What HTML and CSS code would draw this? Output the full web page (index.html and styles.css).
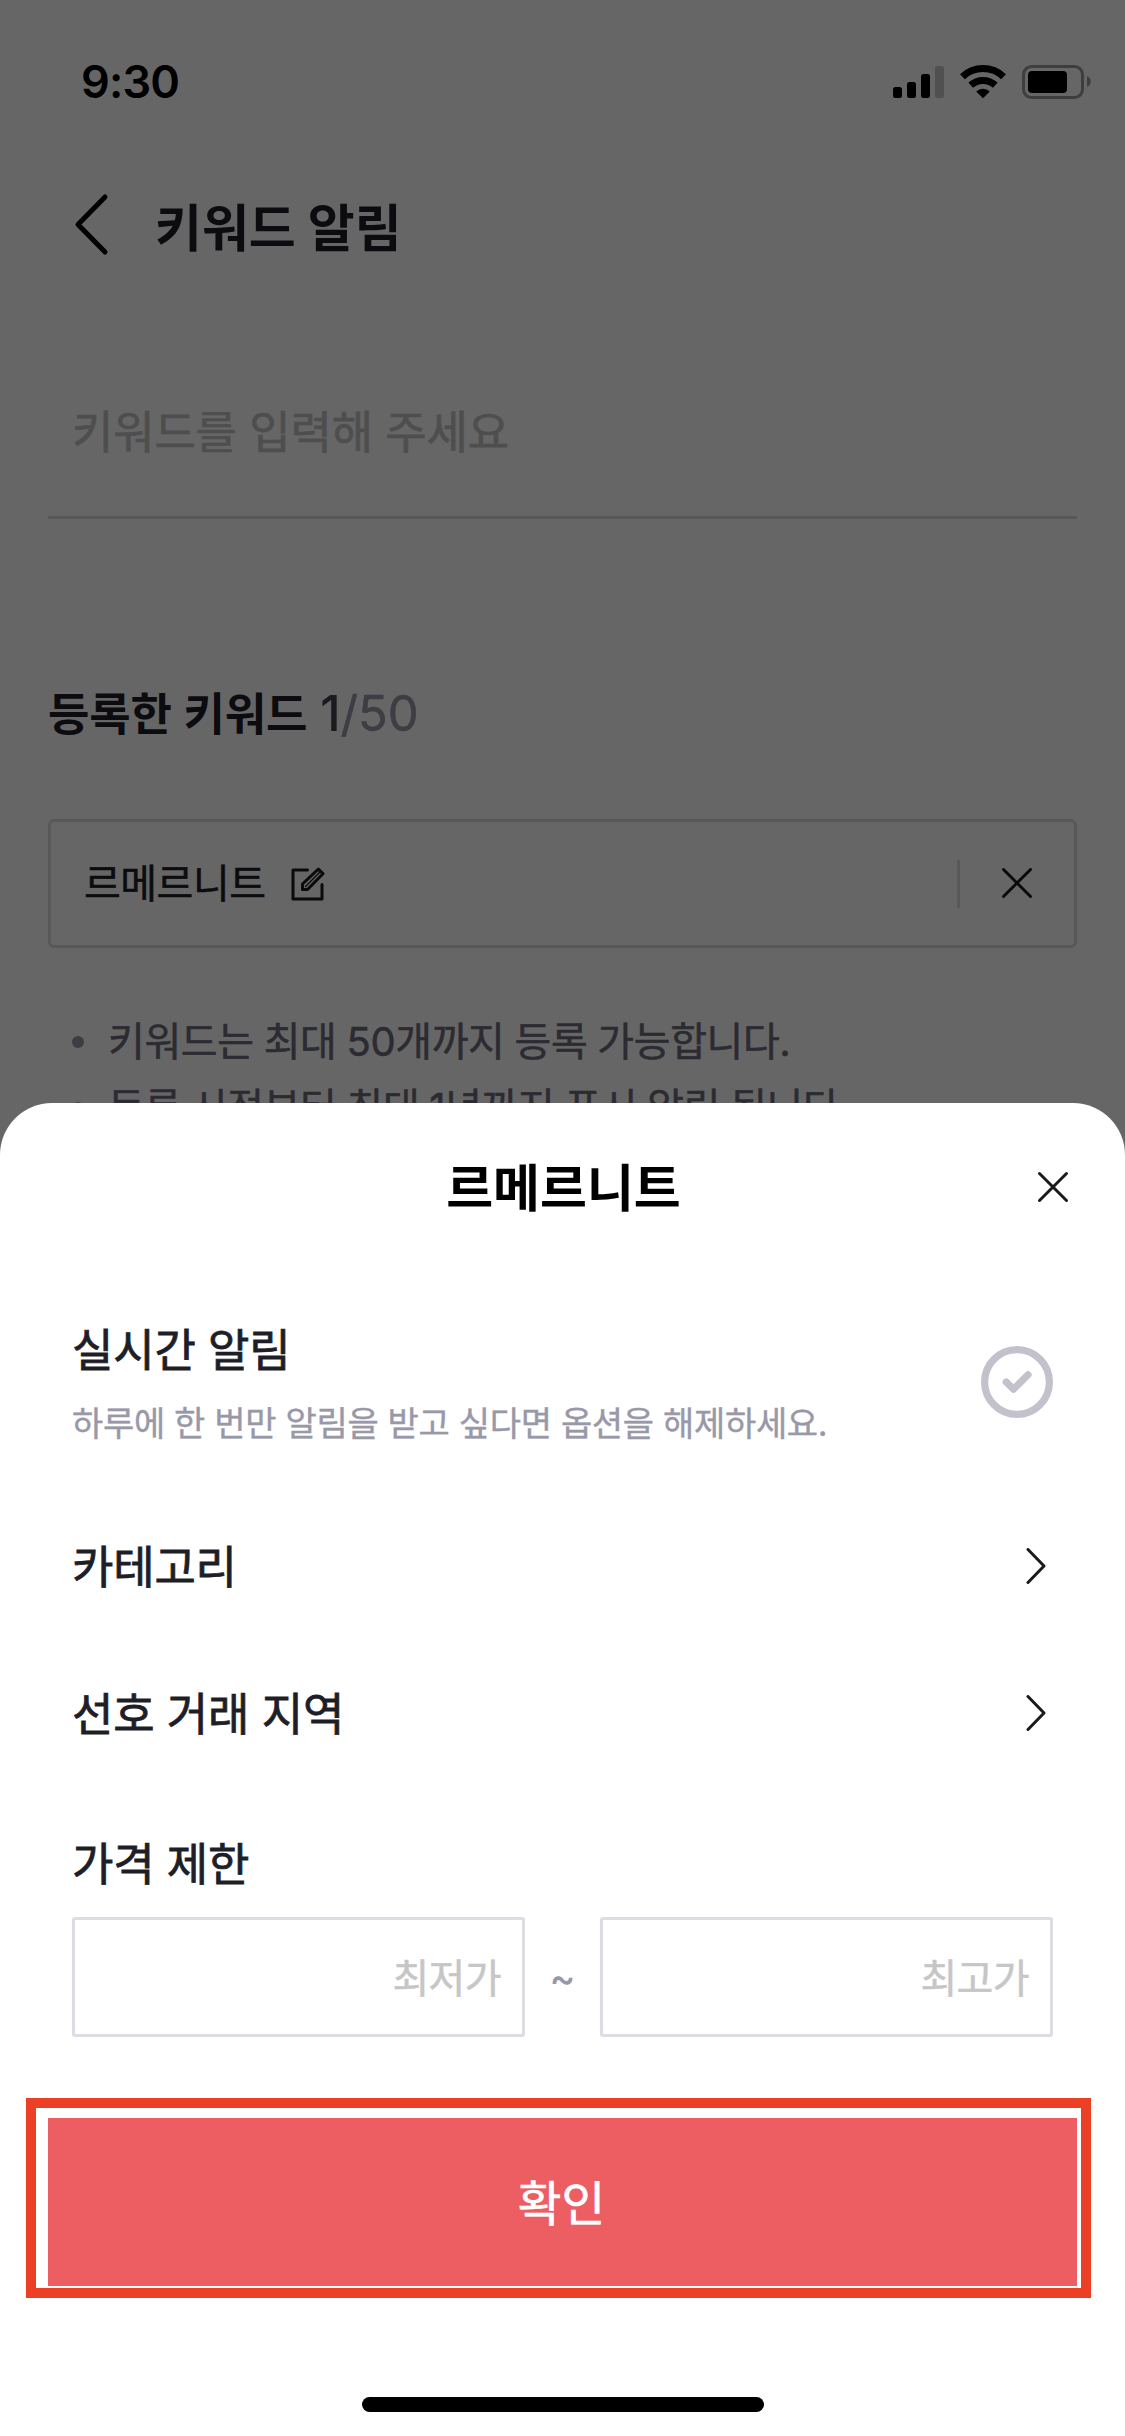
FILE: index.html
```html
<!DOCTYPE html>
<html lang="ko">
<head>
<meta charset="utf-8">
<title>키워드 알림</title>
<link rel="stylesheet" href="styles.css">
</head>
<body>
<div class="screen">
  <div class="page">
    <div class="status">
      <span class="time">9:30</span>
      <svg class="status-icons" width="200" height="36" viewBox="892 64 200 36">
        <rect x="893" y="87" width="9" height="11" rx="2.5"/>
        <rect x="907" y="82" width="9" height="16" rx="2.5"/>
        <rect x="921" y="74" width="9" height="24" rx="2.5"/>
        <rect x="935" y="66" width="9" height="32" rx="2.5" fill="#c8c8c8"/>
        <g fill="none" stroke="#000" stroke-width="7">
          <path d="M962.5 76.7a30 30 0 0 1 41 0"/>
          <path d="M970.7 85.2a18.4 18.4 0 0 1 24.600 0"/>
        </g>
        <path d="M983 98.200l-6.800-6.700a9.700 9.700 0 0 1 13.600 0z"/>
        <rect x="1023.500" y="66.500" width="59" height="31" rx="8" fill="none" stroke="#9c9c9c" stroke-width="3"/>
        <rect x="1028" y="71" width="39" height="22" rx="4"/>
        <path d="M1087 76c5 2 5 9 0 11z" fill="#9c9c9c"/>
      </svg>
    </div>
    <header class="topbar">
      <svg width="36" height="64" viewBox="0 0 36 64" fill="none" stroke="#000" stroke-width="5" stroke-linecap="round" stroke-linejoin="round"><path d="M32 4L5 31.500l27 27.500"/></svg>
      <h1 class="topbar-title">키워드 알림</h1>
    </header>
    <div class="search">키워드를 입력해 주세요</div>
    <h2 class="count"><b>등록한 키워드</b> <span class="now">1</span><span class="max">/50</span></h2>
    <div class="keyword">
      <span class="keyword-name">르메르니트</span>
      <svg class="edit" width="36" height="36" viewBox="290 866 36 36" fill="none" stroke="#1a1a1a" stroke-width="3" stroke-linejoin="round" stroke-linecap="round"><path d="M307.500 870H293v29h29v-14.500"/><path d="M302.500 889.500v-5.500l15.800-14.800 4.700 4.500-15.500 15.800z"/><path d="M305.500 886.500l14-14" stroke-width="1.500"/></svg>
      <span class="bar"></span>
      <svg width="32" height="32" viewBox="0 0 32 32" stroke="#1a1a1a" stroke-width="3" stroke-linecap="round"><path d="M2.500 1.500l27 27M29.500 1.500l-27 27"/></svg>
    </div>
    <ul class="notes">
      <li>키워드는 최대 50개까지 등록 가능합니다.</li>
      <li>등록 시점부터 최대 1년까지 푸시 알림 됩니다.</li>
    </ul>
  </div>
  <div class="scrim"></div>
  <section class="sheet">
    <header class="sheet-head">
      <h2 class="sheet-title">르메르니트</h2>
      <svg class="close" width="32" height="32" viewBox="0 0 32 32" stroke="#1a1a1a" stroke-width="3" stroke-linecap="round"><path d="M2.500 2.500l27 27M29.500 2.500l-27 27"/></svg>
    </header>
    <div class="realtime">
      <div>
        <div class="label">실시간 알림</div>
        <div class="hint">하루에 한 번만 알림을 받고 싶다면 옵션을 해제하세요.</div>
      </div>
      <svg width="72" height="72" viewBox="0 0 72 72" fill="none" stroke="#c3c2cc" stroke-width="7.200" stroke-linecap="round" stroke-linejoin="round"><circle cx="36" cy="36" r="32.400"/><path d="M25.200 36l7.300 7.200L47 28.800"/></svg>
    </div>
    <div class="row">
      <span class="label">카테고리</span>
      <svg class="arrow" width="20" height="38" viewBox="0 0 20 38"><path d="M2 1.500L18 18l-16 16.500"/></svg>
    </div>
    <div class="row">
      <span class="label">선호 거래 지역</span>
      <svg class="arrow" width="20" height="38" viewBox="0 0 20 38"><path d="M2 1.500L18 18l-16 16.500"/></svg>
    </div>
    <div class="price-label label">가격 제한</div>
    <div class="price">
      <div class="field">최저가</div>
      <span class="tilde">~</span>
      <div class="field">최고가</div>
    </div>
    <div class="highlight"><div class="confirm">확인</div></div>
    <div class="home"></div>
  </section>
</div>
</body>
</html>
```
FILE: styles.css
```css
* { box-sizing: border-box; }

body {
  margin: 0;
  font-family: Inter, "Noto Sans CJK KR", sans-serif;
  color: #1e1e28;
}

h1, h2, ul { margin: 0; padding: 0; }
svg { display: block; flex: none; }

.screen {
  position: relative;
  width: 1125px;
  height: 2436px;
  overflow: hidden;
  background: #fff;
}

.page { padding: 0 48px; }

.status {
  display: flex;
  justify-content: space-between;
  align-items: center;
  height: 100px;
  margin: 0 -15px 0 33px;
  padding-top: 64px;
}

.time {
  font-size: 45px;
  font-weight: 600;
  line-height: 36px;
  letter-spacing: -0.8px;
  color: #000;
}

.topbar {
  display: flex;
  align-items: center;
  gap: 46px;
  height: 64px;
  margin-top: 93px;
  padding-left: 25px;
}

.topbar-title {
  padding-top: 8px;
  font-size: 51px;
  font-weight: 700;
  line-height: 64px;
}

.search {
  height: 138px;
  margin-top: 124px;
  padding: 22px 24px 0;
  border-bottom: 3px solid #dcdce4;
  font-size: 45px;
  line-height: 60px;
  letter-spacing: -0.2px;
  color: #c4c4c4;
  -webkit-text-stroke: 0.7px;
}

.count {
  height: 60px;
  margin-top: 165px;
  font-size: 45px;
  font-weight: 500;
  line-height: 60px;
  letter-spacing: -0.1px;
  word-spacing: 1px;
}

.count .now,
.count .max { font-size: 49px; }
.count .now { color: #42424e; }
.count .max { font-weight: 400; color: #9998a8; -webkit-text-stroke: 0.5px; }

.keyword {
  display: flex;
  align-items: center;
  height: 129px;
  margin-top: 75px;
  padding: 0 41px 0 33px;
  border: 3px solid #dcdce4;
  border-radius: 6px;
}

.keyword-name {
  font-size: 40px;
  line-height: 50px;
  letter-spacing: -0.5px;
  -webkit-text-stroke: 0.5px;
}

.edit { margin-left: 24px; }

.bar {
  width: 3px;
  height: 48px;
  margin: 0 41px 0 auto;
  background: #dcdce4;
}

.notes {
  margin-top: 61px;
  list-style: none;
  font-size: 40px;
  line-height: 66px;
  letter-spacing: -0.4px;
  word-spacing: -0.8px;
  color: #6b6b7b;
  -webkit-text-stroke: 0.5px;
}

.notes li {
  display: flex;
  align-items: center;
  gap: 24px;
  height: 66px;
  padding-left: 24px;
  white-space: nowrap;
}

.notes li::before {
  content: "";
  width: 12px;
  height: 12px;
  border-radius: 50%;
  background: #9998a8;
}

.scrim {
  position: absolute;
  inset: 0;
  background: rgba(0, 0, 0, 0.6);
}

.sheet {
  position: absolute;
  left: 0;
  right: 0;
  bottom: 0;
  height: 1333px;
  padding: 0 72px;
  border-radius: 52px 52px 0 0;
  background: #fff;
}

.sheet-head {
  display: grid;
  grid-template-columns: 1fr auto 1fr;
  align-items: center;
  height: 168px;
  margin-right: -16px;
  margin-left: -17px;
}

.sheet-title {
  grid-column: 2;
  padding: 3px 0 0 3px;
  font-size: 51px;
  font-weight: 700;
  line-height: 64px;
  color: #000;
}

.close { justify-self: end; }

.label {
  padding-top: 2px;
  font-size: 45px;
  line-height: 60px;
  letter-spacing: -0.2px;
  -webkit-text-stroke: 0.8px;
}

.realtime {
  display: flex;
  justify-content: space-between;
  align-items: center;
  height: 150px;
  margin-top: 36px;
}

.hint {
  margin-top: 20px;
  margin-bottom: -2px;
  font-size: 34px;
  line-height: 46px;
  letter-spacing: -0.32px;
  color: #9998a8;
  -webkit-text-stroke: 0.4px;
}

.row {
  display: flex;
  justify-content: space-between;
  align-items: center;
  height: 147px;
  padding-right: 7px;
}

.realtime + .row { margin-top: 36px; }

.arrow {
  fill: none;
  stroke: #1a1a1a;
  stroke-width: 3;
  stroke-linecap: round;
  stroke-linejoin: round;
}

.price-label { margin-top: 46px; }

.price {
  display: grid;
  grid-template-columns: 453px 1fr 453px;
  align-items: center;
  height: 120px;
  margin-top: 22px;
}

.field {
  height: 120px;
  padding-right: 21px;
  border: 3px solid #dcdce4;
  border-radius: 3px;
  font-size: 40px;
  line-height: 117px;
  letter-spacing: -0.6px;
  text-align: right;
  color: #c6c6c6;
  -webkit-text-stroke: 0.5px;
}

.tilde {
  font-size: 39px;
  font-weight: 500;
  text-align: center;
  color: #9998a8;
}

.highlight {
  height: 200px;
  margin: 61px -38px 0 -46px;
  padding: 10px 4px 2px 12px;
  border: 10px solid #ec4026;
}

.confirm {
  height: 168px;
  padding-right: 2px;
  background: #ec5e61;
  font-size: 47.5px;
  line-height: 171px;
  text-align: center;
  color: #fff;
  -webkit-text-stroke: 0.7px;
}

.home {
  width: 402px;
  height: 15px;
  margin: 99px auto 0;
  border-radius: 8px;
  background: #000;
}
```
